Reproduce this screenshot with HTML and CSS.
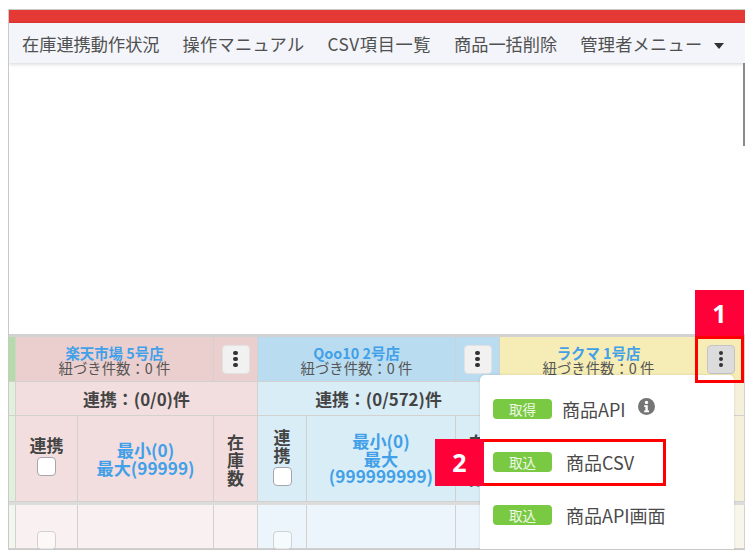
FILE: index.html
```html
<!DOCTYPE html>
<html lang="ja">
<head>
    <meta charset="UTF-8">
    <title>在庫連携</title>
    <link rel="stylesheet" href="styles.css">
</head>
<body>
    <div class="frame">
        <div class="redbar"></div>
        <nav class="nav">
            <span>在庫連携動作状況</span>
            <span class="wide">操作マニュアル</span>
            <span class="wider">CSV項目一覧</span>
            <span>商品一括削除</span>
            <span class="wide">管理者メニュー<i class="caret"></i></span>
        </nav>
        <div class="blank"><div class="scroll"></div></div>

        <div class="grid">
            <!-- row 1: shops -->
            <div class="c green-d"></div>
            <div class="c shop pink-d span2"><b>楽天市場 5号店</b>紐づき件数：0 件</div>
            <div class="c pink-d"><button class="dots"><i></i><i></i><i></i></button></div>
            <div class="c shop blue-d span2"><b>Qoo10 2号店</b>紐づき件数：0 件</div>
            <div class="c blue-d"><button class="dots"><i></i><i></i><i></i></button></div>
            <div class="c shop yellow-d span2"><b>ラクマ 1号店</b>紐づき件数：0 件</div>
            <div class="c yellow-d"><button class="dots active"><i></i><i></i><i></i></button></div>

            <!-- row 2: counts -->
            <div class="c green-m"></div>
            <div class="c count pink-m span3">連携：(0/0)件</div>
            <div class="c count blue-m span3">連携：(0/572)件</div>
            <div class="c count yellow-m span3"></div>

            <!-- row 3: columns -->
            <div class="c green-m"></div>
            <div class="c head pink-m link-col"><span>連携</span><input type="checkbox"></div>
            <div class="c minmax pink-m">最小(0)<br>最大(99999)</div>
            <div class="c head tate pink-m">在<br>庫<br>数</div>
            <div class="c head blue-m link-col narrow"><span>連<br>携</span><input type="checkbox"></div>
            <div class="c minmax blue-m">最小(0)<br>最大<br>(999999999)</div>
            <div class="c head tate blue-m">在<br>庫<br>数</div>
            <div class="c yellow-m"></div>
            <div class="c yellow-m"></div>
            <div class="c yellow-m"></div>

            <!-- row 4: divider -->
            <div class="divider"></div>

            <!-- row 5: data -->
            <div class="c green-l"></div>
            <div class="c pink-l cell-check"><input type="checkbox"></div>
            <div class="c pink-l"></div>
            <div class="c pink-l"></div>
            <div class="c blue-l cell-check"><input type="checkbox"></div>
            <div class="c blue-l"></div>
            <div class="c blue-l"></div>
            <div class="c yellow-l"></div>
            <div class="c yellow-l"></div>
            <div class="c yellow-l"></div>
        </div>

        <div class="menu">
            <div class="menu-item"><span class="tag">取得</span><span>商品API</span><svg class="info" viewBox="0 0 16 16" width="17" height="17"><circle cx="8" cy="8" r="8" fill="#757575"/><circle cx="8" cy="4.2" r="1.6" fill="#fff"/><path d="M5.8 6.8h3.4v5h1.2v1.6H5.8v-1.6H7v-3.4H5.8z" fill="#fff"/></svg></div>
            <div class="menu-item csv"><span class="tag">取込</span><span>商品CSV</span></div>
            <div class="menu-item csv"><span class="tag">取込</span><span>商品API画面</span></div>
        </div>
    </div>

    <div class="mark mark-one"><span class="num">1</span></div>
    <div class="mark-box box-one"></div>
    <div class="mark-box box-two"></div>
    <div class="mark mark-two"><span class="num">2</span></div>
</body>
</html>
```

FILE: styles.css
```css
html, body { margin: 0; padding: 0; background: #fff; }
body { position: relative; width: 754px; height: 558px; overflow: hidden; font-family: "Noto Sans CJK JP", "Noto Sans", sans-serif; color: #505050; }

.frame { position: relative; box-sizing: border-box; width: 737px; height: 541px; margin: 9px 0 0 8px; border: 1px solid #c9c9c9; border-right: 0; overflow: hidden; display: flex; flex-direction: column; }
.redbar { height: 13px; flex: none; background: #e53935; }
.nav { height: 40px; flex: none; display: flex; align-items: center; gap: 23px; padding-left: 13px; background: #f3f5fa; font-size: 17.2px; color: #505050; white-space: nowrap; box-shadow: 0 1px 4px rgba(0,0,0,.18); position: relative; }
.wide { letter-spacing: .3px; }
.wider { letter-spacing: .6px; }
.caret { display: inline-block; margin-left: 11px; vertical-align: middle; border-left: 5px solid transparent; border-right: 5px solid transparent; border-top: 6px solid #333; }
.blank { height: 272px; flex: none; position: relative; margin-bottom: -1px; }
.scroll { position: absolute; right: 0; top: 0; width: 2px; height: 83px; background: #8a8a8a; }

.grid { flex: 1; display: grid; grid-template-columns: 7px 62px 136px 44px 49px 149px 44px 49px 149px 47px; grid-template-rows: 45px 34px 86px 3px 1fr; border-top: 3px solid #d2d2d2; background: #d2d2d2; }
.c { box-sizing: border-box; border-right: 1px solid #d3d0d0; border-bottom: 1px solid #d3d0d0; display: flex; align-items: center; justify-content: center; text-align: center; }
.span2 { grid-column: span 2; }
.span3 { grid-column: span 3; }
.divider { grid-column: 1 / -1; background: #dcdcdc; }

.green-d { background: #b5dca8; }
.green-m { background: #e1f0dc; }
.green-l { background: #f1f7ee; }
.pink-d { background: #ebcfcf; }
.pink-m { background: #f2dede; }
.pink-l { background: #f9f1f1; }
.blue-d { background: #b9dcf0; }
.blue-m { background: #d9edf7; }
.blue-l { background: #ecf5fb; }
.yellow-d { background: #f6ecb5; }
.yellow-m { background: #f5f0dc; }
.yellow-l { background: #f8f5ea; }

.shop { flex-direction: column; font-size: 14.4px; line-height: 15px; color: #555; padding-top: 1px; }
.shop b { color: #42a0e8; font-weight: 700; }
.dots { box-sizing: border-box; width: 28px; height: 29px; padding: 0; border: 1px solid #e2e2e2; border-radius: 4px; background: #f1f1f1; display: flex; flex-direction: column; align-items: center; justify-content: center; gap: 1.5px; }
.dots i { width: 4.5px; height: 4.5px; border-radius: 50%; background: #333; }
.dots.active { background: #dcdcdc; border-color: #c4c4c4; }

.count { font-size: 16.9px; font-weight: 700; color: #444; }
.head { font-size: 17px; font-weight: 700; color: #444; line-height: 18px; }
.link-col { flex-direction: column; gap: 3px; padding-bottom: 5px; }
.narrow { padding-bottom: 4px; }
.tate { padding-top: 2px; }
.minmax { font-size: 17.2px; font-weight: 700; color: #42a0e8; line-height: 17.5px; }
.cell-check { align-items: flex-end; }

input[type=checkbox] { appearance: none; box-sizing: border-box; width: 19px; height: 19px; margin: 0; border: 1px solid #a5a5b0; border-radius: 4px; background: #fff; flex: none; }
.cell-check input { opacity: .5; margin-bottom: -2px; border-color: #b0b0b0; }

.menu { position: absolute; left: 471px; top: 365px; width: 254px; height: 180px; background: #fff; border-radius: 5px 5px 0 0; box-shadow: 0 0 3px rgba(0,0,0,.12); padding-top: 7px; box-sizing: border-box; }
.menu-item { height: 53px; display: flex; align-items: center; padding-left: 13px; font-size: 18px; color: #4a4a4a; }
.tag { width: 59px; height: 20px; margin-right: 10px; border-radius: 4px; background: #7ac943; color: #eef8e6; font-size: 13.5px; line-height: 20px; text-align: center; flex: none; }
.csv .tag { margin-right: 14px; }
.info { margin-left: 12px; margin-top: -5px; }

.mark { position: absolute; background: #ff0038; display: flex; align-items: center; justify-content: center; }
.num { color: #fff; font-family: "Noto Sans", sans-serif; font-size: 25px; font-weight: 700; line-height: 1; }
.mark-one { left: 695px; top: 290px; width: 49px; height: 47px; }
.mark-two { left: 435px; top: 439px; width: 49px; height: 47px; }
.mark-box { position: absolute; box-sizing: border-box; border: 3px solid #f00; }
.box-one { left: 695px; top: 336px; width: 49px; height: 47px; }
.box-two { left: 470px; top: 439px; width: 196px; height: 47px; }
```
